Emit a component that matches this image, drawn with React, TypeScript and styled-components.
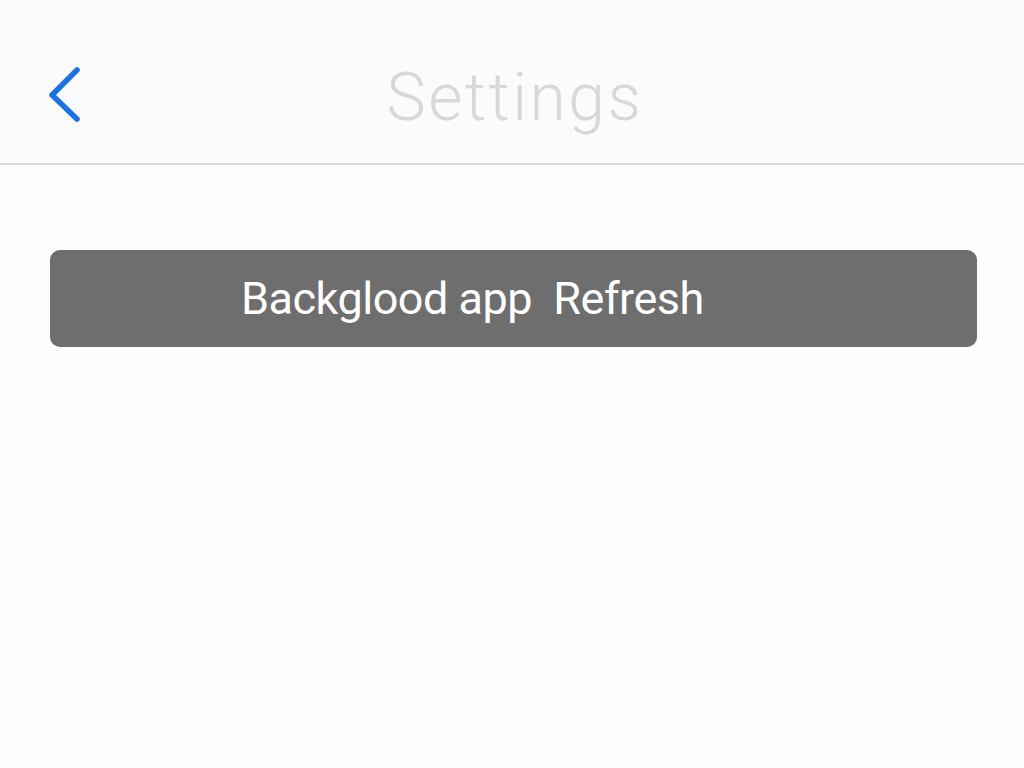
import React from 'react';
import styled, { createGlobalStyle } from 'styled-components';

const GlobalStyle = createGlobalStyle`
  html, body {
    margin: 0;
    padding: 0;
    background: #fdfdfd;
    font-family: Roboto, 'Liberation Sans', sans-serif;
  }
`;

export default function App() {
  return (
    <>
      <GlobalStyle />
      <S_Page>
        <S_Header>
          <S_BackButton aria-label='Back'>
            <svg width='40' height='60' viewBox='0 0 40 60' fill='none'>
              <path
                d='M33 5 L8 30 L33 54'
                stroke='#1a73e0'
                strokeWidth='5.5'
                strokeLinecap='round'
                strokeLinejoin='round'
              />
            </svg>
          </S_BackButton>
          <S_Title>Settings</S_Title>
          <S_Spacer />
        </S_Header>
        <S_Content>
          <S_Row>
            <S_RowLabel>Backglood app&nbsp; Refresh</S_RowLabel>
          </S_Row>
        </S_Content>
      </S_Page>
    </>
  );
}

const S_Page = styled.div`
  min-height: 100vh;
  display: flex;
  flex-direction: column;
  background: #fdfdfd;
`;

const S_Header = styled.header`
  display: grid;
  grid-template-columns: 120px 1fr 120px;
  align-items: center;
  height: 165px;
  padding-top: 26px;
  box-sizing: border-box;
  background: #fbfbfb;
  border-bottom: 2px solid #d9d9d9;
`;

const S_BackButton = styled.button`
  display: flex;
  align-items: center;
  justify-content: flex-start;
  width: 60px;
  height: 60px;
  margin-left: 44px;
  padding: 0;
  border: none;
  background: none;
  cursor: pointer;
`;

const S_Title = styled.h1`
  margin: 6px 0 0 6px;
  text-align: center;
  font-family: Roboto, 'Liberation Sans', sans-serif;
  font-weight: 300;
  font-size: 66px;
  letter-spacing: 2.5px;
  color: #d8d8da;
`;

const S_Spacer = styled.div``;

const S_Content = styled.main`
  padding: 85px 47px 0 50px;
`;

const S_Row = styled.div`
  display: flex;
  align-items: center;
  height: 97px;
  padding-left: 191px;
  border-radius: 10px;
  background: #6e6e6e;
`;

const S_RowLabel = styled.span`
  font-family: Roboto, 'Liberation Sans', sans-serif;
  font-size: 45px;
  font-weight: 400;
  letter-spacing: -0.5px;
  color: #ffffff;
`;
